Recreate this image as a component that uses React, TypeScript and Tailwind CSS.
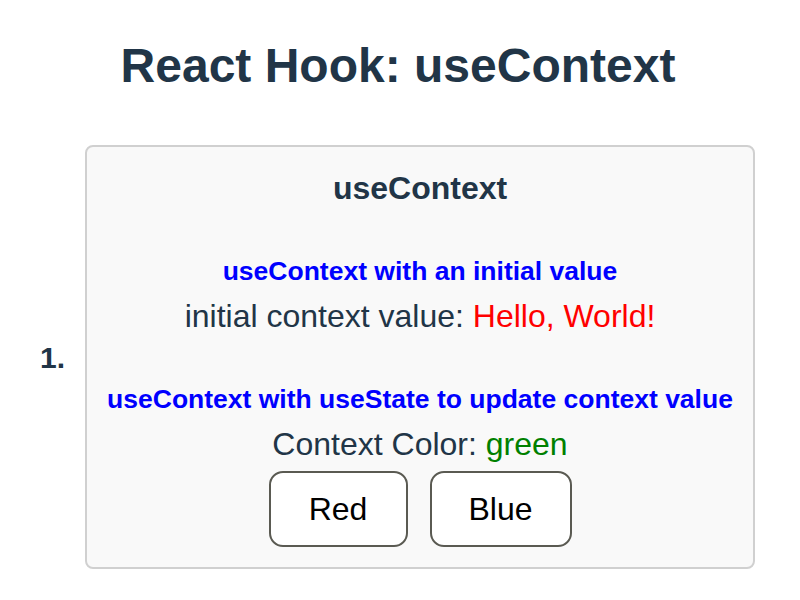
import React, { createContext, useContext, useState } from 'react';

const GreetingContext = createContext('Hello, World!');
const ColorContext = createContext<{ color: string; setColor: (c: string) => void }>({
  color: 'green',
  setColor: () => {},
});

const colorClass: Record<string, string> = {
  green: 'text-[#008000]',
  red: 'text-[#ff0000]',
  blue: 'text-[#0000ff]',
};

const InitialValue = () => {
  const value = useContext(GreetingContext);
  return (
    <p className="mt-[12px] text-[32px] leading-[37px]">
      initial context value: <span className="text-[#ff0000]">{value}</span>
    </p>
  );
};

const ColorDisplay = () => {
  const { color, setColor } = useContext(ColorContext);
  return (
    <>
      <p className="mt-[12px] text-[32px] leading-[37px]">
        Context Color: <span className={colorClass[color]}>{color}</span>
      </p>
      <div className="flex justify-center gap-[22px] mt-[8px]">
        <button
          onClick={() => setColor('red')}
          className="w-[139px] h-[76px] rounded-[14px] border-2 border-[#5a5a52] bg-white text-black text-[32px]"
        >
          Red
        </button>
        <button
          onClick={() => setColor('blue')}
          className="w-[142px] h-[76px] rounded-[14px] border-2 border-[#5a5a52] bg-white text-black text-[32px]"
        >
          Blue
        </button>
      </div>
    </>
  );
};

export default function App() {
  const [color, setColor] = useState('green');

  return (
    <main className="min-h-screen bg-white text-[#213547] font-['Liberation_Sans',Arial,sans-serif]">
      <h1 className="pt-[36px] pr-[4px] text-center text-[48px] font-bold leading-[60px]">React Hook: useContext</h1>

      <div className="mt-[49px] flex items-center pl-[40px] pr-[45px]">
        <span className="w-[45px] text-[30px] font-bold">1.</span>
        <div className="flex-1 rounded-[8px] border-2 border-[#d0d0d0] bg-[#f9f9f9] pt-[23px] pb-[20px] text-center">
          <h2 className="text-[32px] font-bold leading-[37px]">useContext</h2>

          <h3 className="mt-[49px] text-[26.5px] font-bold leading-[30px] text-[#0000ff]">
            useContext with an initial value
          </h3>
          <GreetingContext.Provider value="Hello, World!">
            <InitialValue />
          </GreetingContext.Provider>

          <h3 className="mt-[49px] text-[26.5px] font-bold leading-[30px] text-[#0000ff]">
            useContext with useState to update context value
          </h3>
          <ColorContext.Provider value={{ color, setColor }}>
            <ColorDisplay />
          </ColorContext.Provider>
        </div>
      </div>
    </main>
  );
}
